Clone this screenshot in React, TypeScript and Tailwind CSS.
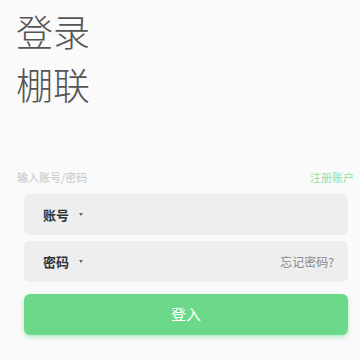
import React from "react";

const font = { fontFamily: '"Noto Sans CJK SC", "Noto Sans", sans-serif' };

function Caret() {
  return (
    <span className="ml-[10px] w-0 h-0 border-l-[2.5px] border-r-[2.5px] border-t-[3px] border-l-transparent border-r-transparent border-t-[#666666]" />
  );
}

export default function App() {
  return (
    <div className="w-[360px] h-[360px] bg-[#fafafa] overflow-hidden" style={font}>
      <div className="pl-[16px] pt-[5px]">
        <div className="text-[37px] leading-[53px] font-light text-[#555555]">登录</div>
        <div className="text-[37px] leading-[53px] font-light text-[#555555]">棚联</div>
      </div>
      <div className="flex justify-between items-center pl-[17px] pr-[6px] mt-[59px] h-[14px]">
        <span className="text-[11px] text-[#c6c6c6]">输入账号/密码</span>
        <span className="text-[11px] text-[#8ee0a6]">注册账户</span>
      </div>
      <div className="flex flex-col gap-[6px] ml-[24px] w-[324px] mt-[10px]">
        <div className="h-[41px] rounded-[6px] bg-[#eeeeee] flex items-center pl-[19px] pr-[14px]">
          <span className="text-[13px] font-bold text-[#333333]">账号</span>
          <Caret />
        </div>
        <div className="h-[41px] rounded-[6px] bg-[#eeeeee] flex items-center pl-[19px] pr-[14px]">
          <span className="text-[13px] font-bold text-[#333333]">密码</span>
          <Caret />
          <span className="ml-auto text-[12px] text-[#888888]">忘记密码?</span>
        </div>
        <button className="mt-[6px] h-[41px] rounded-[6px] bg-[#6cd88a] text-white text-[15px] shadow-[0_2px_4px_rgba(108,216,138,0.5)]">
          登入
        </button>
      </div>
    </div>
  );
}
